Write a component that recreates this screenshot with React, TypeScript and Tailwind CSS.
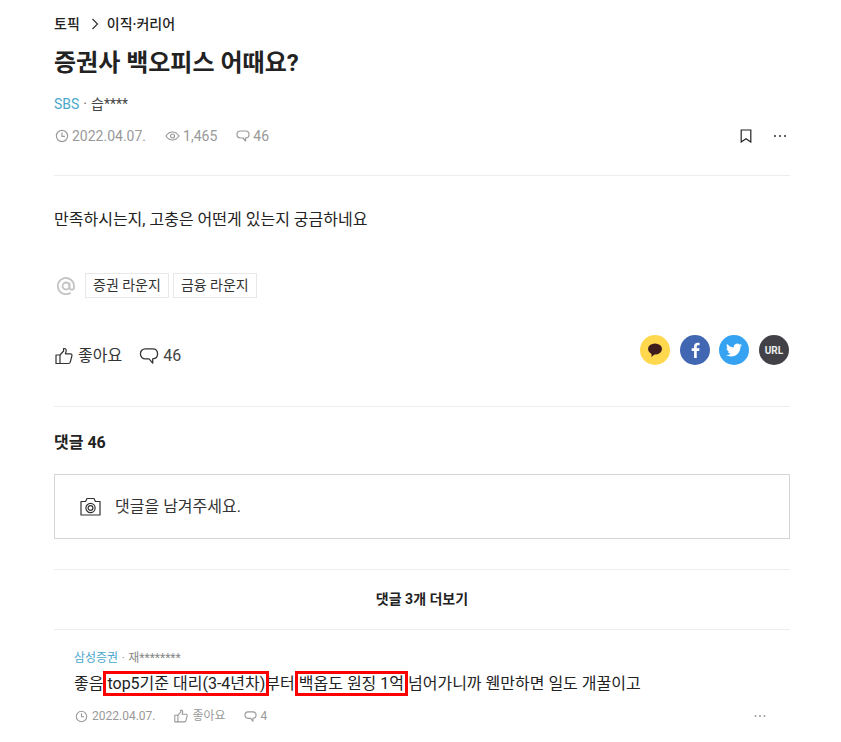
import React from "react";

const font = { fontFamily: '"Roboto","Noto Sans CJK KR",sans-serif' };

function Clock({ s = 14 }: { s?: number }) {
  return (
    <svg width={s} height={s} viewBox="0 0 14 14" fill="none" stroke="#9a9a9a" strokeWidth="1.2">
      <circle cx="7" cy="7" r="5.6" />
      <path d="M7 3.6V7.3H10" />
    </svg>
  );
}
function Eye() {
  return (
    <svg width="15" height="14" viewBox="0 0 15 14" fill="none" stroke="#9a9a9a" strokeWidth="1.2">
      <path d="M1 7C2.6 4.4 4.8 3 7.5 3S12.4 4.4 14 7C12.4 9.6 10.2 11 7.5 11S2.6 9.6 1 7Z" />
      <circle cx="7.5" cy="7" r="2" />
    </svg>
  );
}
function Bubble({ s = 14, c = "#9a9a9a", w = 1.2 }: { s?: number; c?: string; w?: number }) {
  return (
    <svg width={s} height={s} viewBox="0 0 14 14" fill="none" stroke={c} strokeWidth={w}>
      <path d="M4.5 2H9.5C11.6 2 13 3.4 13 5.5C13 7.6 11.6 9 9.6 9L9.6 12L7 9H4.5C2.4 9 1 7.6 1 5.5C1 3.4 2.4 2 4.5 2Z" strokeLinejoin="round" />
    </svg>
  );
}
function Thumb({ s = 18, c = "#333", w = 1.2 }: { s?: number; c?: string; w?: number }) {
  return (
    <svg width={s} height={s} viewBox="0 0 18 18" fill="none" stroke={c} strokeWidth={w} strokeLinejoin="round">
      <path d="M1 8H5V16.5H1Z" />
      <path d="M5 8L8.6 4V1.6C9.8 1.2 11.2 2 11.2 3.6C11.2 4.8 10.8 5.8 10.4 6.8H15.4C16.6 6.8 17.2 7.8 16.9 8.8L15.3 15C15.1 16 14.4 16.5 13.4 16.5H5" />
    </svg>
  );
}

export default function App() {
  return (
    <div style={font} className="w-[841px] h-[742px] overflow-hidden bg-white pl-[54px] pr-[51px] text-[#222]">
      <div className="flex items-center h-[16px] mt-[16px] text-[14px] font-medium leading-[16px] text-[#222]">
        <span>토픽</span>
        <svg width="10" height="12" viewBox="0 0 10 12" fill="none" stroke="#333" strokeWidth="1.2" className="ml-[10px] mr-[7px]">
          <path d="M2.5 1L7.5 6L2.5 11" />
        </svg>
        <span>이직·커리어</span>
      </div>
      <h1 className="mt-[14px] text-[24px] leading-[34px] font-bold text-[#222]">증권사 백오피스 어때요?</h1>
      <div className="mt-[15px] flex text-[14px] leading-[18px]">
        <span className="text-[#4aa8cc]">SBS</span>
        <span className="text-[#666] mx-[4px]">·</span>
        <span className="text-[#444]">습****</span>
      </div>
      <div className="mt-[13px] flex items-center h-[20px] text-[14px] text-[#999] pl-[1px]">
        <Clock />
        <span className="ml-[3px]">2022.04.07.</span>
        <span className="ml-[19px]"><Eye /></span>
        <span className="ml-[3px]">1,465</span>
        <span className="ml-[19px]"><Bubble /></span>
        <span className="ml-[3px]">46</span>
        <div className="ml-auto flex items-center">
          <svg width="12" height="14" viewBox="0 0 12 14" fill="none" stroke="#222" strokeWidth="1.2">
            <path d="M1.2 1H10.8V13L6 9.8L1.2 13Z" />
          </svg>
          <svg width="14" height="4" viewBox="0 0 14 4" fill="#333" className="ml-[21px] mr-[3px]">
            <circle cx="2" cy="2" r="1" />
            <circle cx="7" cy="2" r="1" />
            <circle cx="12" cy="2" r="1" />
          </svg>
        </div>
      </div>
      <div className="mt-[29px] border-t border-[#eeeeee]" />
      <p className="mt-[33px] text-[16px] leading-[22px] text-[#222]">만족하시는지, 고충은 어떤게 있는지 궁금하네요</p>
      <div className="mt-[42px] flex items-center h-[25px]">
        <span className="w-[31px] pl-[3px]">
          <svg width="18" height="18" viewBox="0 0 18 18" fill="none" stroke="#c4c4c4" strokeWidth="1.8" className="block">
            <circle cx="9" cy="9" r="3.5" />
            <path d="M12.5 5.4V10.4A2.2 2.2 0 0 0 17 10.4V9A8.1 8.1 0 1 0 13.6 15.7" />
          </svg>
        </span>
        <span className="border border-[#e8e8e8] h-[25px] px-[7px] text-[14px] leading-[23px] text-[#333]">증권 라운지</span>
        <span className="ml-[4px] border border-[#e8e8e8] h-[25px] px-[7px] text-[14px] leading-[23px] text-[#333]">금융 라운지</span>
      </div>
      <div className="mt-[42px] flex items-center h-[32px] pl-[1px]">
        <Thumb />
        <span className="ml-[5px] text-[16px] text-[#333]">좋아요</span>
        <span className="ml-[17px]"><Bubble s={20} c="#333" w={0.9} /></span>
        <span className="ml-[4px] text-[16px] text-[#444]">46</span>
        <div className="ml-auto self-start -mt-[5px] flex items-center pr-[1px]">
          <span className="w-[30px] h-[30px] rounded-full bg-[#ffd84d] flex items-center justify-center">
            <svg width="16" height="16" viewBox="0 0 16 16" fill="#3f1d1d">
              <ellipse cx="8" cy="7" rx="7" ry="5.6" />
              <path d="M4.6 10.6L4.4 15L8 12Z" />
            </svg>
          </span>
          <span className="ml-[10px] w-[30px] h-[30px] rounded-full bg-[#4267b2] flex items-center justify-center">
            <svg width="9" height="16" viewBox="0 0 10 18" fill="#fff">
              <path d="M6.4 18V10H9.1L9.5 7H6.4V5.1C6.4 4.2 6.7 3.6 8 3.6H9.6V.9C9.3.9 8.4.8 7.3.8 5 .8 3.4 2.2 3.4 4.8V7H.7V10H3.4V18Z" />
            </svg>
          </span>
          <span className="ml-[9px] w-[30px] h-[30px] rounded-full bg-[#36a3f2] flex items-center justify-center">
            <svg width="16" height="16" viewBox="0 0 24 24" fill="#fff">
              <path d="M23.95 4.57a10 10 0 0 1-2.82.77 4.96 4.96 0 0 0 2.16-2.72c-.95.55-2 .96-3.12 1.19a4.92 4.92 0 0 0-8.38 4.48C7.69 8.1 4.07 6.13 1.64 3.16a4.82 4.82 0 0 0-.67 2.48c0 1.71.87 3.21 2.19 4.1a4.9 4.9 0 0 1-2.23-.61v.06c0 2.39 1.7 4.38 3.95 4.83a4.9 4.9 0 0 1-2.21.08 4.93 4.93 0 0 0 4.6 3.42A9.87 9.87 0 0 1 0 19.54a13.94 13.94 0 0 0 7.55 2.21c9.05 0 14-7.5 14-13.98 0-.21 0-.42-.02-.63a9.94 9.94 0 0 0 2.42-2.57Z" />
            </svg>
          </span>
          <span className="ml-[10px] w-[30px] h-[30px] rounded-full bg-[#414147] flex items-center justify-center text-[10px] font-bold text-[#eee]">URL</span>
        </div>
      </div>
      <div className="mt-[34px] border-t border-[#eeeeee]" />
      <h2 className="mt-[27px] text-[16px] leading-[18px] font-bold text-[#222]">댓글 46</h2>
      <div className="mt-[22px] h-[65px] border border-[#d5d5d5] flex items-center pl-[25px]">
        <svg width="21" height="19" viewBox="0 0 21 19" fill="none" stroke="#333" strokeWidth="1.2">
          <path d="M1 4.5H5.6L7 1.5H14L15.4 4.5H20V18H1Z" strokeLinejoin="round" />
          <circle cx="10.5" cy="11" r="4.6" />
          <circle cx="10.5" cy="11" r="2.4" />
        </svg>
        <span className="ml-[14px] text-[16px] text-[#333]">댓글을 남겨주세요.</span>
      </div>
      <div className="mt-[30px] h-[61px] border-y border-[#eeeeee] flex items-center justify-center text-[14px] font-bold text-[#222]">
        댓글 3개 더보기
      </div>
      <div className="pl-[20px] mt-[20px]">
        <div className="flex text-[12px] leading-[16px]">
          <span className="text-[#4aa8cc]">삼성증권</span>
          <span className="text-[#999] mx-[3.5px]">·</span>
          <span className="text-[#888]">재********</span>
        </div>
        <p className="mt-[6px] text-[16px] leading-[24px] text-[#222] whitespace-nowrap">
          좋음{" "}
          <span className="outline-[3px] outline-solid outline-[#f00] px-[1px] -mx-[1px]">top5기준 대리(3-4년차)</span>
          부터{" "}
          <span className="outline-[3px] outline-solid outline-[#f00] px-[1px] -mx-[1px]">백옵도 원징 1억</span>
          {" "}넘어가니까 웬만하면 일도 개꿀이고
        </p>
        <div className="mt-[10px] flex items-center h-[20px] text-[12px] text-[#999] pl-[1px]">
          <Clock s={13} />
          <span className="ml-[4px]">2022.04.07.</span>
          <span className="ml-[19px]"><Thumb s={14} c="#999" w={1.4} /></span>
          <span className="ml-[4px]">좋아요</span>
          <span className="ml-[18px]"><Bubble s={13} /></span>
          <span className="ml-[4px]">4</span>
          <svg width="12" height="4" viewBox="0 0 12 4" fill="#999" className="ml-auto mr-[24px]">
            <circle cx="1.5" cy="2" r="1" />
            <circle cx="6" cy="2" r="1" />
            <circle cx="10.5" cy="2" r="1" />
          </svg>
        </div>
      </div>
    </div>
  );
}
